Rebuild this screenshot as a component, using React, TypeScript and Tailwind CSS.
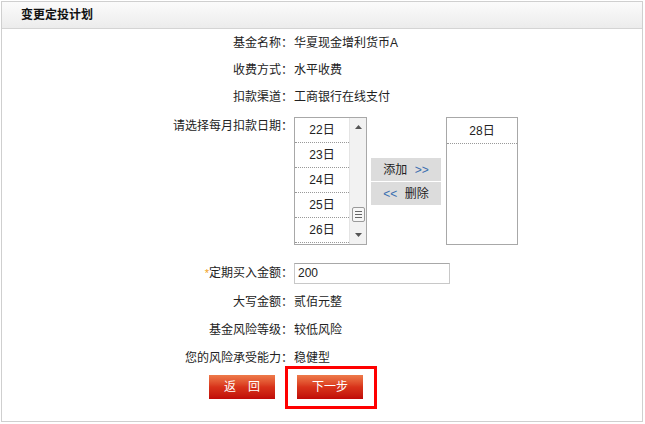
import React from "react";

const Row = ({ label, children, h = "h-[27px]", star = false }: { label: string; children?: React.ReactNode; h?: string; star?: boolean }) => (
  <div className={`flex items-center ${h}`}>
    <div className="w-[291px] text-right">
      {star && <span className="text-[#f0a020] text-[11px]">*</span>}
      {label}
    </div>
    <div className="ml-[1px]">{children}</div>
  </div>
);

const Arrow = ({ up }: { up?: boolean }) => (
  <svg width="7" height="4" viewBox="0 0 7 4">
    {up ? <polygon points="0,4 7,4 3.5,0" fill="#555" /> : <polygon points="0,0 7,0 3.5,4" fill="#555" />}
  </svg>
);

export default function App() {
  const days = ["22日", "23日", "24日", "25日", "26日"];
  return (
    <div className="relative w-[645px] h-[424px] bg-white font-['Liberation_Sans','Noto_Sans_CJK_SC',sans-serif] text-[12px] leading-[16px] text-[#222]">
      <div className="absolute left-[1px] top-[1px] w-[642px] h-[421px] border border-[#cfcfcf] flex flex-col">
        <div className="h-[27px] border-b border-[#d4d4d4] bg-gradient-to-b from-[#fbfbfb] to-[#ececec] flex items-center pl-[19px] font-bold text-[#111]">
          变更定投计划
        </div>
        <Row label="基金名称：">华夏现金增利货币A</Row>
        <Row label="收费方式：">水平收费</Row>
        <Row label="扣款渠道：">工商银行在线支付</Row>
        <div className="flex items-start pt-[7px]">
          <div className="w-[291px] text-right pt-[1px]">请选择每月扣款日期：</div>
          <div className="ml-[1px] flex items-start">
            <div className="w-[73px] h-[128px] border border-[#a8a8a8] flex">
              <div className="w-[54px] flex flex-col">
                {days.map((d) => (
                  <div key={d} className="h-[25px] border-b border-dotted border-[#999] flex items-center justify-center">
                    {d}
                  </div>
                ))}
              </div>
              <div className="w-[17px] bg-[#f2f2f2] border-l border-[#e4e4e4] flex flex-col items-center justify-between py-[7px]">
                <Arrow up />
                <div className="flex flex-col items-center">
                  <div className="w-[13px] h-[15px] border border-[#9a9a9a] rounded-[2px] bg-[#f6f6f6] flex flex-col items-center justify-center gap-[2px] mb-[11px]">
                    <div className="w-[7px] h-[1px] bg-[#666]" />
                    <div className="w-[7px] h-[1px] bg-[#666]" />
                    <div className="w-[7px] h-[1px] bg-[#666]" />
                  </div>
                  <Arrow />
                </div>
              </div>
            </div>
            <div className="ml-[4px] mt-[41px] w-[70px] flex flex-col gap-[1px]">
              <div className="h-[23px] bg-[#dcdcdc] flex items-center justify-center">
                添加&nbsp;<span className="text-[#3a6fb0] ml-[4px]">&gt;&gt;</span>
              </div>
              <div className="h-[23px] bg-[#dcdcdc] flex items-center justify-center">
                <span className="text-[#3a6fb0] mr-[4px]">&lt;&lt;</span>&nbsp;删除
              </div>
            </div>
            <div className="ml-[5px] w-[72px] h-[128px] border border-[#a8a8a8]">
              <div className="h-[26px] border-b border-dotted border-[#999] flex items-center justify-center">28日</div>
            </div>
          </div>
        </div>
        <div className="mt-[17px]">
          <Row label="定期买入金额：" star h="h-[22px]">
            <div className="w-[156px] h-[21px] border border-[#c8c8c8] border-t-[#a8a8a8] flex items-center pl-[3px]">200</div>
          </Row>
        </div>
        <div className="mt-[4px]">
          <Row label="大写金额：" h="h-[28px]">贰佰元整</Row>
          <Row label="基金风险等级：" h="h-[28px]">较低风险</Row>
          <Row label="您的风险承受能力：" h="h-[28px]">稳健型</Row>
        </div>
        <div className="mt-[3px] flex pl-[207px] gap-[22px]">
          <div className="w-[66px] h-[24px] bg-gradient-to-b from-[#ee7a4a] via-[#d8321a] to-[#c00808] text-white flex items-center justify-center tracking-[12px] pl-[12px]">
            返回
          </div>
          <div className="w-[66px] h-[24px] bg-gradient-to-b from-[#ee7a4a] via-[#d8321a] to-[#c00808] text-white flex items-center justify-center">
            下一步
          </div>
        </div>
      </div>
      <div className="absolute left-[285px] top-[366px] w-[92px] h-[43px] border-[3px] border-[#ff0000]" />
    </div>
  );
}
